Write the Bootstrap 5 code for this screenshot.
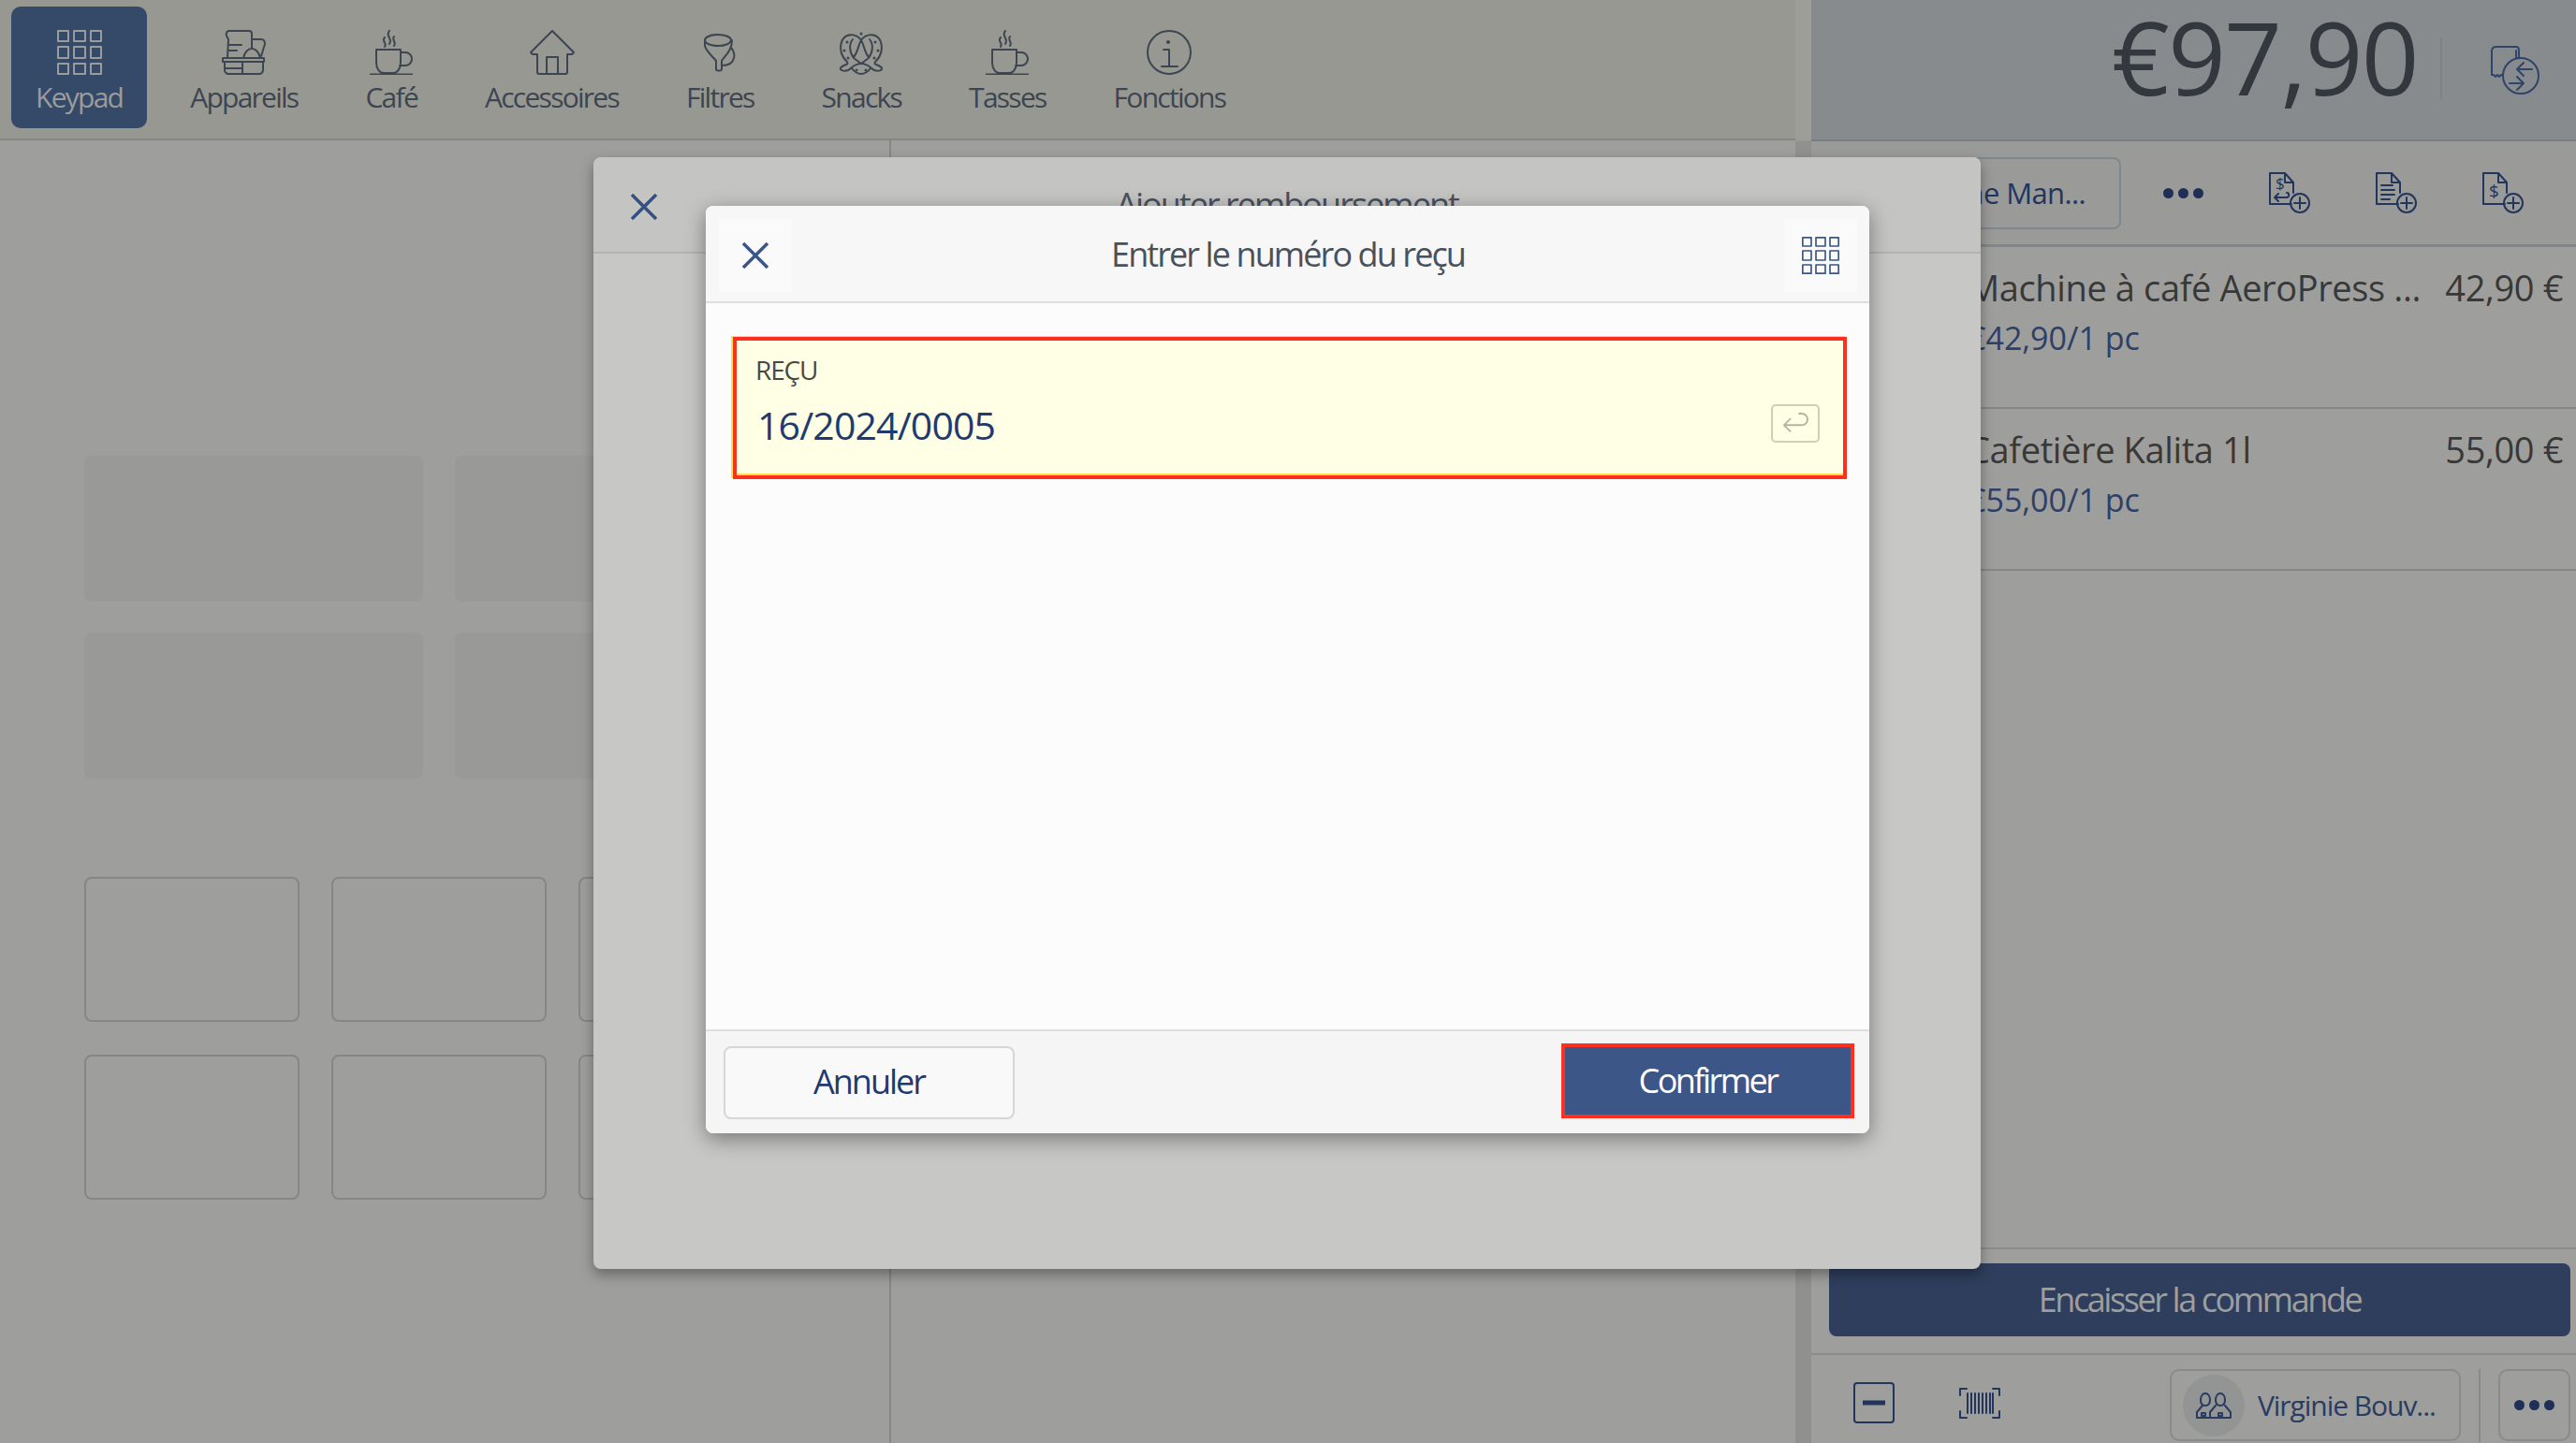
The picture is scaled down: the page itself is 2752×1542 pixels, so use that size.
<!DOCTYPE html>
<html lang="fr">
<head>
<meta charset="utf-8">
<title>Entrer le numéro du reçu</title>
<link rel="stylesheet" href="https://cdn.jsdelivr.net/npm/bootstrap@5.3.0/dist/css/bootstrap.min.css">
<style>
html,body{margin:0;width:2752px;height:1542px;overflow:hidden}
body{font-family:"Open Sans","Noto Sans","Roboto",sans-serif;font-stretch:88%;background:#9e9e9c;color:#3c4550}
button{font-stretch:88%}
svg{display:block;fill:none;stroke:currentColor;stroke-width:2;stroke-linecap:round;stroke-linejoin:round;overflow:visible}
.stage{width:2752px;height:1542px;position:relative;overflow:hidden}
.pane-left{width:1918px;background:#9e9e9c}
.pane-sep{width:17px;background:linear-gradient(#9d9e99 0,#9d9e99 150px,#90908e 151px)}
.pane-right{width:817px;background:#9e9e9c}
.topbar{height:150px;background:#989893;border-bottom:2px solid #868683;padding:7px 0 0 12px;gap:20px;flex:none}
.tab{height:130px;padding:25px 26px 0;font-size:30px;font-weight:500;letter-spacing:-.058em;line-height:36px;color:#3c4550;border-radius:10px;white-space:nowrap}
.tab svg{height:48px;margin-bottom:6px}
.tab-on{background:#354968;color:#9a9c9b}
.split{flex:1 1 auto}
.half-l{width:952px;border-right:2px solid #868683;padding:337px 0 0 90px}
.tile-a,.tile-b{border-radius:8px}
.grid-a{display:grid;grid-template-columns:362px 362px;grid-auto-rows:156px;gap:33px 34px}
.tile-a{background:#999997}
.grid-b{display:grid;grid-template-columns:repeat(3,230px);grid-auto-rows:155px;gap:35px 34px;margin-top:105px}
.tile-b{border:2px solid #868684}
.sum-bar{height:151px;background:#878b8d;border-bottom:2px solid #7a7f83;padding-right:40px;flex:none}
.sum-val{font-size:108px;letter-spacing:-.015em;line-height:120px;color:#33383f;margin-top:-27px}
.sum-rule{width:2px;height:67px;background:#7e8386;margin:-4px 52px 0 24px}
.act-bar{height:113px;background:#9a9a99;border-bottom:3px solid #80868c;flex:none;color:#22355c;padding-right:56px}
.act-btn{position:relative;left:-7px;width:338px;height:77px;border:2px solid #7f868d;border-radius:8px;font-size:31px;font-weight:500;letter-spacing:-.02em;color:#22355c;padding-right:36px;white-space:nowrap}
.dots{gap:5px}
.dots i{width:11px;height:11px;border-radius:50%;background:#1e3058;display:block}
.gap-dots{margin-left:38px}
.gap-ico{margin-left:70px}
.line-list{flex:1 1 auto}
.line-item{height:173px;border-bottom:2px solid #868684;padding:20px 14px 0 167px;flex:none}
.line-name{font-size:38px;font-weight:500;letter-spacing:-.01em;line-height:46px;color:#383838;white-space:nowrap}
.line-sub{font-size:34px;line-height:42px;color:#2e4066;margin-top:10px;white-space:nowrap}
.pay-wrap{height:113px;padding:15px 6px 0 19px;border-top:2px solid #8c8c8a;flex:none}
.pay-btn{width:792px;height:78px;background:#2e3e5c;border:0;border-radius:8px;font-size:36px;letter-spacing:-.067em;color:#9c9e9f;padding:0}
.foot-bar{height:96px;border-top:2px solid #8c8c8a;flex:none;padding:15px 6px 0 45px;color:#22355c}
.mark-minus{margin-top:14px}
.mark-code{margin-top:20px}
.client{width:311px;height:77px;border:2px solid #8a8a88;border-radius:10px;padding:0 0 0 12px;font-size:30px;font-weight:500;letter-spacing:-.035em;color:#2a3b60;gap:14px;white-space:nowrap;margin-left:181px}
.avatar{width:66px;height:66px;border-radius:50%;background:#939595;flex:none}
.foot-rule{width:2px;height:78px;background:#8a8a88;margin:0 19px 0 19px}
.more{width:77px;height:77px;border:2px solid #8a8a88;border-radius:10px}
.sheet{position:absolute;border:0;border-radius:8px}
.sheet-back{left:634px;top:168px;width:1482px;height:1188px;background:#c7c7c5;box-shadow:0 6px 14px rgba(0,0,0,.35)}
.sheet-back .card-header{height:103px;background:#c4c4c2;border-bottom:2px solid #b3b3b1;padding:0;font-size:36px;letter-spacing:-.055em;color:#48515c;border-radius:8px 8px 0 0}
.back-x{left:39px;top:38px;color:#34507f}
.sheet-front{left:754px;top:220px;width:1243px;height:991px;background:#fcfcfc;box-shadow:0 6px 22px rgba(0,0,0,.4)}
.sheet-front .card-header{height:104px;background:#f7f7f7;border-bottom:2px solid #dedede;padding:14px 13px 0 14px;border-radius:8px 8px 0 0}
.head-btn{width:78px;height:78px;background:#fafafa;border:0;padding:0;border-radius:0;color:#3a5588}
.head-title{font-size:36px;letter-spacing:-.053em;line-height:44px;color:#48515c;margin-top:-12px}
.sheet-front .card-body{padding:36px 24px 0 29px}
.field{height:152px;border:4px solid #ff2f1f;background:#ffffe6;box-shadow:-2px -1px 0 #ffdc50,inset 0 -2px 0 #ffdc50;padding:13px 16px 0 20px}
.field-label{font-size:28px;font-weight:500;letter-spacing:-.04em;line-height:36px;color:#4a4a42}
.field-val{font-size:41px;letter-spacing:-.021em;line-height:48px;color:#1f3a70;margin-top:17px;margin-left:2px}
.enter-key{width:52px;height:41px;border:2px solid #cfcfb8;border-radius:5px;color:#b5b5a4;margin:0 9px 0 0;align-self:flex-start;position:relative;top:55px}
.sheet-front .card-footer{height:111px;background:#f5f5f5;border-top:2px solid #dedede;padding:16px 16px 0 19px;border-radius:0 0 8px 8px}
.btn-cancel{width:311px;height:78px;background:#f9f9f9;border:2px solid #d6d6d6;border-radius:8px;font-size:36px;letter-spacing:-.056em;color:#1f3a70;padding:0 0 2px}
.btn-ok{width:313px;height:80px;background:#3c5688;border:4px solid #ff2f1f;border-radius:0;font-size:36px;letter-spacing:-.07em;color:#fff;padding:0;margin-top:-3px}
</style>
</head>
<body>
<svg width="0" height="0" class="position-absolute">
  <defs>
    <symbol id="grid" viewBox="0 0 48 48">
      <rect x="1" y="1" width="11" height="11"/><rect x="18" y="1" width="12" height="11"/><rect x="36" y="1" width="11" height="11"/>
      <rect x="1" y="18" width="11" height="12"/><rect x="18" y="18" width="12" height="12"/><rect x="36" y="18" width="11" height="12"/>
      <rect x="1" y="36" width="11" height="11"/><rect x="18" y="36" width="12" height="11"/><rect x="36" y="36" width="11" height="11"/>
    </symbol>
    <symbol id="cup" viewBox="0 0 46 48">
      <path d="M16 8c-4 4 3 6 0 10M21 1c-5 5 4 8 0 14M26 7c-3 4 3 6 0 10"/>
      <path d="M7 21h26v14c0 7-4 11-8 11h-10c-4 0-8-4-8-11zM33 24h5a7 7 0 0 1 0 14h-6M0 47.500h46"/>
    </symbol>
    <symbol id="close" viewBox="0 0 30 30"><path d="M2 2l26 26M28 2L2 28" stroke-width="3.500" stroke-linecap="butt"/></symbol>
    <symbol id="docbase" viewBox="0 0 44 44">
      <path d="M24 34H1V1h16l9 10v11M17 1v10h9"/><circle cx="33" cy="33" r="10"/><path d="M33 27v12M27 33h12"/>
    </symbol>
  </defs>
</svg>
<div class="stage d-flex">
  <div class="pane-left d-flex flex-column">
    <nav class="topbar d-flex align-items-start">
      <div class="tab tab-on d-flex flex-column align-items-center"><svg width="48" viewBox="0 0 48 48"><use href="#grid"/></svg>Keypad</div>
      <div class="tab d-flex flex-column align-items-center"><svg width="48" viewBox="0 0 48 48"><path d="M7 1h22c2 0 3 1 3 3v16M7 1C3 3 5 7 7 10L6 30M32 10h10c3 0 4 2 4 5l-4 13M7 16h14M7 22h9M23 30c1-6 5-10 9-10s8 4 9 10M1 30h44v4H1zM3 34v9c0 2 2 4 4 4h33c2 0 4-2 4-4v-9M3 41h19M22 34v13"/></svg>Appareils</div>
      <div class="tab d-flex flex-column align-items-center"><svg width="46" viewBox="0 0 46 48"><use href="#cup"/></svg>Café</div>
      <div class="tab d-flex flex-column align-items-center"><svg width="48" viewBox="0 0 48 48"><path d="M24 1l23 23-2 2h-5v19c0 1-1 2-2 2H10c-1 0-2-1-2-2V26H3l-2-2zM18 47V29h12v18"/></svg>Accessoires</div>
      <div class="tab d-flex flex-column align-items-center"><svg width="34" viewBox="0 0 34 48"><ellipse cx="15" cy="11" rx="14" ry="6"/><path d="M1 11v6c1 5 7 10 12 16v9c0 2 6 2 6 0v-9c4-6 11-11 11-22M29 19c3 3 4 8 3 11-1 5-6 8-13 8"/></svg>Filtres</div>
      <div class="tab d-flex flex-column align-items-center"><svg width="48" viewBox="0 0 48 48"><path d="M24 11C20 5 11 3 6 8S0 25 8 33c2 2 2 3 0 4-3 1-7 3-6 5s5 2 8 1c4-2 6-7 14-7s10 5 14 7c3 1 7 1 8-1s-3-4-6-5c-2-1-2-2 0-4 8-8 7-20 2-25S28 5 24 11zM24 11c-3 4-3 12-8 18M24 11c3 4 3 12 8 18M15 10c-4 5-4 13 1 20l8 6 8-6c5-7 5-15 1-20M14 41c3 4 7 6 10 6s7-2 10-6"/><path d="M9 13v.1M6 22v.1M10 30v.1M39 13v.1M42 22v.1M38 30v.1M24 4v.1M19 43v.1M29 43v.1" stroke-width="3"/></svg>Snacks</div>
      <div class="tab d-flex flex-column align-items-center"><svg width="46" viewBox="0 0 46 48"><use href="#cup"/></svg>Tasses</div>
      <div class="tab d-flex flex-column align-items-center"><svg width="48" viewBox="0 0 48 48"><circle cx="24" cy="24" r="23"/><path d="M23 13v.1" stroke-width="4"/><path d="M18 21h6v17M16 39h17"/></svg>Fonctions</div>
    </nav>
    <div class="split d-flex">
      <div class="half-l">
        <div class="grid-a"><div class="tile-a"></div><div class="tile-a"></div><div class="tile-a"></div><div class="tile-a"></div></div>
        <div class="grid-b"><div class="tile-b"></div><div class="tile-b"></div><div class="tile-b"></div><div class="tile-b"></div><div class="tile-b"></div><div class="tile-b"></div></div>
      </div>
    </div>
  </div>
  <div class="pane-sep"></div>
  <div class="pane-right d-flex flex-column">
    <div class="sum-bar d-flex align-items-center justify-content-end">
      <div class="sum-val">€97,90</div>
      <div class="sum-rule"></div>
      <svg width="51" height="52" viewBox="0 0 51 52"><g stroke="#2f4468"><path d="M13 31H11l-2 2-2-2-2 2-2-2H1V5c0-2 2-4 4-4h22c2 0 3 2 3 4v8h-3V5"/><circle cx="32" cy="32" r="19"/><path d="M44 25H29M35 18l-7 7 7 7M20 40h15M28 33l7 7-7 7"/></g></svg>
    </div>
    <div class="act-bar d-flex align-items-center">
      <div class="act-btn d-flex align-items-center justify-content-end flex-none">Machine Man...</div>
      <div class="dots gap-dots d-flex"><i></i><i></i><i></i></div>
      <svg class="ms-auto" width="44" height="44" viewBox="0 0 44 44"><path d="M24 34H1V1h16l9 10v11M17 1v10h9M6 27H19M10 23l-4 4 4 4M19 27c3-1 3-5 0-5"/><circle cx="33" cy="33" r="10"/><path d="M33 27v12M27 33h12"/><text x="7" y="18" font-size="17" stroke="none" fill="currentColor">$</text></svg>
      <svg class="gap-ico" width="44" height="44" viewBox="0 0 44 44"><use href="#docbase"/><path d="M6 14h12M6 19h14M6 24h14M6 29h9"/></svg>
      <svg class="gap-ico" width="44" height="44" viewBox="0 0 44 44"><use href="#docbase"/><text x="7" y="27" font-size="19" stroke="none" fill="currentColor">$</text></svg>
    </div>
    <div class="line-list d-flex flex-column">
      <div class="line-item d-flex justify-content-between">
        <div><div class="line-name">Machine à café AeroPress ...</div><div class="line-sub">€42,90/1 pc</div></div>
        <div class="line-name">42,90 €</div>
      </div>
      <div class="line-item d-flex justify-content-between">
        <div><div class="line-name">Cafetière Kalita 1l</div><div class="line-sub">€55,00/1 pc</div></div>
        <div class="line-name">55,00 €</div>
      </div>
    </div>
    <div class="pay-wrap"><button class="btn pay-btn" type="button">Encaisser la commande</button></div>
    <div class="foot-bar d-flex align-items-start">
      <svg class="mark-minus" width="44" height="44" viewBox="0 0 44 44"><rect x="1" y="1" width="42" height="42" rx="3"/><path d="M10 22h24" stroke-width="5" stroke-linecap="butt"/></svg>
      <svg class="ms-auto mark-code" width="44" height="33" viewBox="0 0 44 33"><path d="M8 1H1v7M36 1h7v7M8 32H1v-7M36 32h7v-7M9 6v21M13 6v21M17 6v21M21 6v21M25 6v21M29 6v21M33 6v21M36 6v21"/></svg>
      <div class="client d-flex align-items-center"><div class="avatar d-flex align-items-center justify-content-center"><svg width="38" height="28" viewBox="0 0 38 28"><path d="M10 1c3 0 5 3 5 7s-2 6-5 6-5-2-5-6 2-7 5-7zM26 1c3 0 5 3 5 7s-2 6-5 6-5-2-5-6 2-7 5-7zM7 14L1 21v6h15M21 14l-6 7v6h22v-6l-6-7M6 22h4v3H6zM24 22h4v3h-4z"/></svg></div><span>Virginie Bouv...</span></div>
      <div class="foot-rule"></div>
      <div class="more d-flex align-items-center justify-content-center"><div class="dots d-flex"><i></i><i></i><i></i></div></div>
    </div>
  </div>

  <div class="card sheet sheet-back">
    <div class="card-header d-flex align-items-center justify-content-center position-relative">
      <svg class="position-absolute back-x" width="30" height="30"><use href="#close"/></svg>
      Ajouter remboursement
    </div>
  </div>

  <div class="card sheet sheet-front">
    <div class="card-header d-flex align-items-start justify-content-between">
      <button class="btn head-btn d-flex align-items-center justify-content-center" type="button" aria-label="Fermer"><svg width="30" height="30"><use href="#close"/></svg></button>
      <div class="head-title align-self-center">Entrer le numéro du reçu</div>
      <button class="btn head-btn d-flex align-items-center justify-content-center" type="button" aria-label="Clavier"><svg width="40" height="40"><use href="#grid"/></svg></button>
    </div>
    <div class="card-body">
      <div class="field d-flex justify-content-between">
        <div><div class="field-label">REÇU</div><div class="field-val">16/2024/0005</div></div>
        <div class="enter-key d-flex align-items-center justify-content-center"><svg width="30" height="22" viewBox="0 0 30 22"><path d="M9 7L2 14l7 7M2 14h20a6 6 0 0 0 0-13h-3" transform="translate(1 -1) scale(.95)"/></svg></div>
      </div>
    </div>
    <div class="card-footer d-flex justify-content-between align-items-start">
      <button class="btn btn-cancel" type="button">Annuler</button>
      <button class="btn btn-ok" type="button">Confirmer</button>
    </div>
  </div>
</div>
</body>
</html>
